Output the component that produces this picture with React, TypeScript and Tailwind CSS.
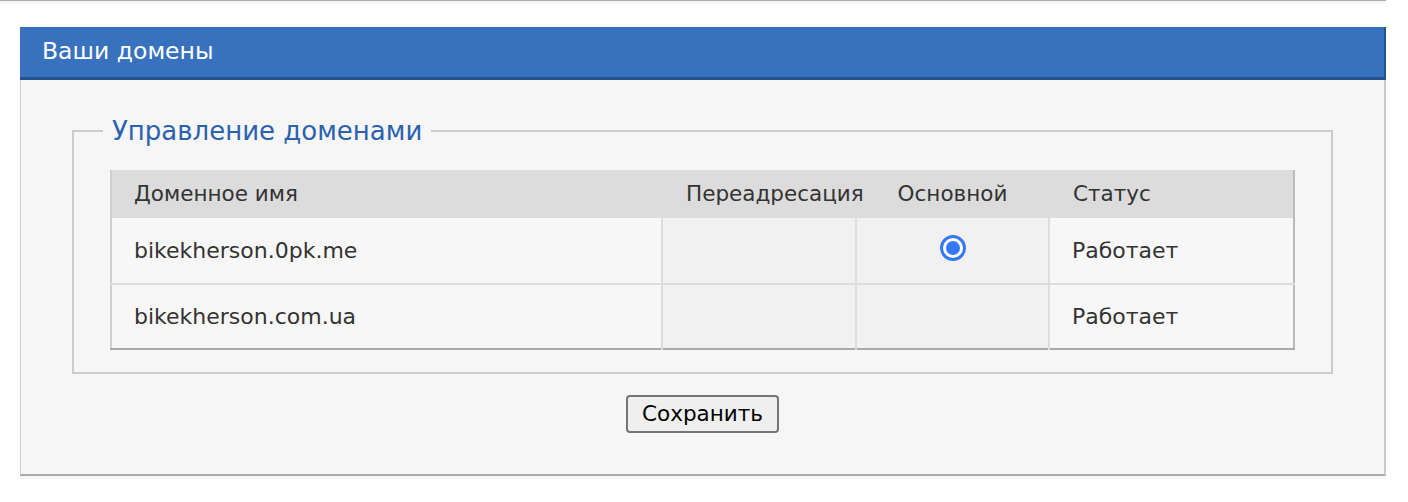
import React, { useState } from 'react';

const domains = [
  { name: 'bikekherson.0pk.me', status: 'Работает' },
  { name: 'bikekherson.com.ua', status: 'Работает' },
];

export default function App() {
  const [primary, setPrimary] = useState('bikekherson.0pk.me');

  return (
    <div className="min-h-[502px] bg-white font-['DejaVu_Sans',Verdana,sans-serif] text-[#333]">
      {/* bottom of the previous panel */}
      <div className="w-[1386px] h-[4px] border-t border-[#aaa] bg-[#f6f6f6]" />

      <div className="ml-[20px] mt-[23px] w-[1366px]">
        <div className="h-[53px] bg-[#3872be] border-b-[3px] border-r-2 border-[#24528f] pl-[22px] flex items-center text-white text-[23.5px]">
          Ваши домены
        </div>

        <div className="bg-[#f6f6f6] border-l border-r-2 border-b-2 border-l-[#ccc] border-r-[#ccc] border-b-[#aaa] px-[51px] pt-[36px] pb-[41px]">
          <fieldset className="border-2 border-[#ccc] px-[36px] pb-[22px] pt-[24px]">
            <legend className="-ml-[7px] px-[9px] text-[26px] leading-[30px] text-[#2b62ad]">
              Управление доменами
            </legend>

            <table className="w-full table-fixed border-collapse text-[22px] border-l-2 border-r-2 border-b-2 border-l-[#d0d0d0] border-r-[#bbb] border-b-[#aaa]">
              <colgroup>
                <col className="w-[551px]" />
                <col className="w-[194px]" />
                <col className="w-[193px]" />
                <col />
              </colgroup>
              <thead>
                <tr className="bg-[#dcdcdc] h-[48px] text-[21.5px]">
                  <th className="text-left font-normal pl-[22px] whitespace-nowrap">Доменное имя</th>
                  <th className="text-left font-normal pl-[24px] whitespace-nowrap overflow-visible">Переадресация</th>
                  <th className="text-center font-normal whitespace-nowrap">Основной</th>
                  <th className="text-left font-normal pl-[24px] whitespace-nowrap">Статус</th>
                </tr>
              </thead>
              <tbody>
                {domains.map((d, i) => (
                  <tr
                    key={d.name}
                    className={i === 0 ? 'h-[66px]' : 'h-[65px] border-t-2 border-[#dddddd]'}
                  >
                    <td className="bg-[#f7f7f7] pl-[22px]">{d.name}</td>
                    <td className="bg-[#f1f1f1] border-l-2 border-[#dddddd]" />
                    <td className="bg-[#f1f1f1] border-l-2 border-[#dddddd] text-center">
                      {primary === d.name && (
                        <button
                          type="button"
                          onClick={() => setPrimary(d.name)}
                          className="inline-flex items-center justify-center w-[26px] h-[26px] rounded-full border-[3px] border-[#3478f6] bg-white align-middle -mt-[8px]"
                        >
                          <span className="block w-[14px] h-[14px] rounded-full bg-[#3478f6]" />
                        </button>
                      )}
                    </td>
                    <td className="bg-[#f7f7f7] border-l-2 border-[#dddddd] pl-[22px]">{d.status}</td>
                  </tr>
                ))}
              </tbody>
            </table>
          </fieldset>

          <div className="flex justify-center mt-[21px]">
            <button
              type="button"
              className="h-[38px] px-[14px] bg-[#efefef] border-2 border-[#767676] rounded-[4px] text-black text-[21.5px] leading-none"
            >
              Сохранить
            </button>
          </div>
        </div>
        <div className="h-[3px] bg-[#f6f6f6]" />
      </div>
    </div>
  );
}
